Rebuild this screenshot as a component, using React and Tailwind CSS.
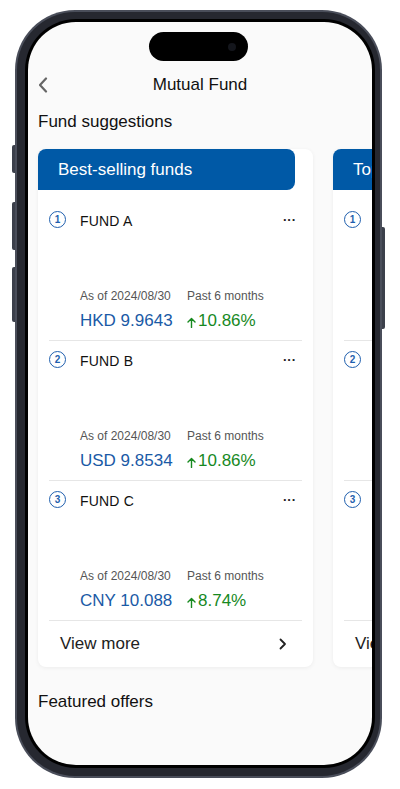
import React from 'react';

const funds = [
    { n: 1, name: 'FUND A', price: 'HKD 9.9643', change: '10.86%' },
    { n: 2, name: 'FUND B', price: 'USD 9.8534', change: '10.86%' },
    { n: 3, name: 'FUND C', price: 'CNY 10.088', change: '8.74%' },
];

const NumBadge = ({ n }) => (
    <div className="w-[17px] h-[17px] rounded-full border-[1.5px] border-[#1f5fae] flex items-center justify-center text-[10px] leading-none font-bold text-[#1f5fae]">
        {n}
    </div>
);

const UpArrow = () => (
    <svg width="9" height="11" viewBox="0 0 9 11" className="mr-[2px] mt-[3px]">
        <path d="M4.5 10.5V1.5M1 5l3.5-3.5L8 5" fill="none" stroke="#17891f" strokeWidth="1.4" strokeLinecap="round" strokeLinejoin="round" />
    </svg>
);

const FundRow = ({ fund, first }) => (
    <div className={`mx-[11px] border-b border-[#e6e6e6] pt-[10px] pb-[8px] ${first ? 'mt-[11px]' : ''}`}>
        <div className="flex items-center h-[20px]">
            <div className="w-[31px] -mt-[3px]">
                <NumBadge n={fund.n} />
            </div>
            <span className="text-[14px] text-[#111] tracking-[0.2px]">{fund.name}</span>
            <span className="ml-auto mr-[6px] text-[13px] font-bold text-[#222] leading-none -mt-[4px]">···</span>
        </div>
        <div className="mt-[57px] pl-[31px] flex text-[12px] leading-[16px] text-[#555]">
            <span className="w-[107px]">As of 2024/08/30</span>
            <span>Past 6 months</span>
        </div>
        <div className="mt-[6px] pl-[31px] flex items-center text-[17px] leading-[22px]">
            <span className="w-[107px] text-[#1a5aa6]">{fund.price}</span>
            <span className="flex items-center text-[#17891f]">
                <UpArrow />
                {fund.change}
            </span>
        </div>
    </div>
);

const FundCard = ({ title }) => (
    <div className="w-[275px] shrink-0 bg-white rounded-[8px] shadow-[0_1px_4px_rgba(0,0,0,0.06)]">
        <div className="w-[257px] h-[41px] bg-[#0059a6] rounded-tl-[8px] rounded-tr-[8px] rounded-br-[8px] flex items-center pl-[20px] text-white text-[17px] whitespace-nowrap overflow-hidden">
            {title}
        </div>
        {funds.map((f, i) => (
            <FundRow key={f.n} fund={f} first={i === 0} />
        ))}
        <div className="h-[46px] flex items-center pl-[22px] pr-[26px] text-[17px] text-[#222]">
            <span>View more</span>
            <svg width="8" height="12" viewBox="0 0 8 12" className="ml-auto">
                <path d="M1.5 1.5L6 6l-4.5 4.5" fill="none" stroke="#222" strokeWidth="1.8" strokeLinecap="round" strokeLinejoin="round" />
            </svg>
        </div>
    </div>
);

const App = () => {
    return (
        <div className="w-[400px] h-[789px] bg-white pt-[10px] pl-[15px]" style={{ fontFamily: '"Liberation Sans", Arial, sans-serif' }}>
            <div className="relative w-[367px] h-[768px]">
                {/* side buttons */}
                <div className="absolute -left-[3px] top-[135px] w-[4px] h-[28px] rounded-l-[2px] bg-[#3c404b]" />
                <div className="absolute -left-[3px] top-[192px] w-[4px] h-[48px] rounded-l-[2px] bg-[#3c404b]" />
                <div className="absolute -left-[3px] top-[257px] w-[4px] h-[55px] rounded-l-[2px] bg-[#3c404b]" />
                <div className="absolute -right-[3px] top-[217px] w-[4px] h-[102px] rounded-r-[2px] bg-[#3c404b]" />

                <div className="relative w-full h-full rounded-[60px] bg-[#4a4e5a] p-[2px]">
                    <div className="w-full h-full rounded-[58px] bg-[#262830] pl-[8px] pr-[5px] pt-[7px] pb-[8px]">
                        <div className="w-full h-full rounded-[51px] bg-black p-[3px]">
                            <div className="w-[344px] h-[743px] rounded-[48px] bg-[#fafafa] overflow-hidden">
                                {/* dynamic island */}
                                <div className="pt-[10px] flex justify-center">
                                    <div className="w-[99px] h-[29px] rounded-full bg-black flex items-center justify-end pr-[12px] ml-[-3px]">
                                        <div className="w-[8px] h-[8px] rounded-full bg-[#14161c]" />
                                    </div>
                                </div>

                                {/* nav bar */}
                                <div className="mt-[9px] h-[30px] relative flex items-center justify-center">
                                    <svg width="10" height="16" viewBox="0 0 10 16" className="absolute left-[10px] top-[7px]">
                                        <path d="M8 1.5L2 8l6 6.5" fill="none" stroke="#666" strokeWidth="2.2" strokeLinecap="round" strokeLinejoin="round" />
                                    </svg>
                                    <span className="text-[17px] text-[#111]">Mutual Fund</span>
                                </div>

                                <div className="mt-[11px] pl-[10px] text-[17px] leading-[22px] text-[#111]">Fund suggestions</div>

                                <div className="mt-[16px] pl-[10px] flex gap-[20px]">
                                    <FundCard title="Best-selling funds" />
                                    <FundCard title="Top-performing funds" />
                                </div>

                                <div className="mt-[24px] pl-[10px] text-[17px] leading-[22px] text-[#111]">Featured offers</div>
                            </div>
                        </div>
                    </div>
                </div>
            </div>
        </div>
    );
};

export default App;
